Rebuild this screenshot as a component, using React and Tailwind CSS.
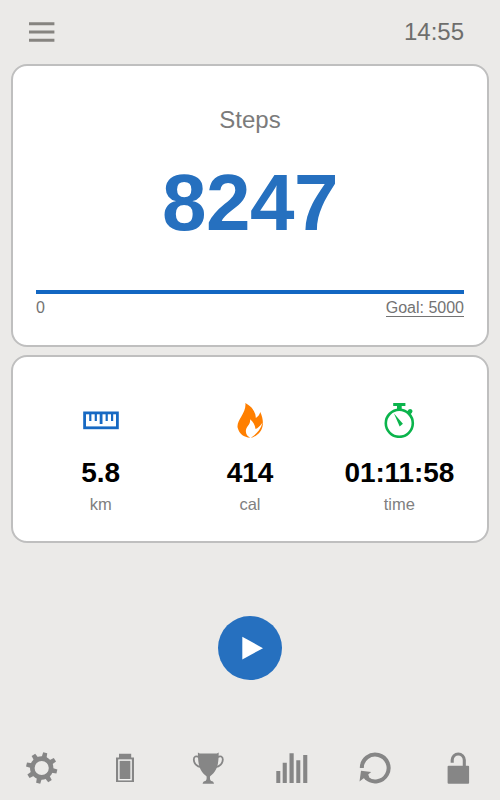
import React from 'react';

const RulerIcon = () => (
    <svg viewBox="0.6 0 36 36" className="w-9 h-9" fill="none" stroke="#1769c3">
        <rect x="2.2" y="10.9" width="32.8" height="14.9" strokeWidth="2.8" />
        <path d="M7.9 11v8M13.4 11v8M24.3 11v8M29.7 11v8" strokeWidth="2.2" />
        <path d="M18.7 11v11" strokeWidth="2.8" />
    </svg>
);

const FlameIcon = () => (
    <svg viewBox="0 -0.4 36 36.4" className="w-9 h-9" fill="#ff7f00">
        <path d="M13.3 0.5C20 4 23.6 9.2 23.9 15.8C26.2 14.5 27.7 12.4 28.4 9.8C32.6 19.3 32.2 28 24.2 33.4C22.4 34.6 20.8 35.4 18.8 35.7C23.6 33 28.6 28.2 30.7 20.4C28.2 24.2 25.8 26.2 23.6 26.9C23 22.8 21.2 19.3 18.1 17C18.7 22.8 13.8 24 13.8 29.2C13.8 32.3 15.6 34.4 18.2 35.8C11.7 35.4 7.2 32 5.6 26C3.5 18.3 14.7 10.8 13.3 0.5Z" />
    </svg>
);

const StopwatchIcon = () => (
    <svg viewBox="-1 -0.3 36 36" className="w-9 h-9" fill="#0bb44c">
        <path d="M11.2 0.7h12.2v3h-3.7v3h-4.7v-3h-3.8z" />
        <circle cx="17.3" cy="21" r="13.5" fill="none" stroke="#0bb44c" strokeWidth="2.6" />
        <path d="M24.9 9.4l1.6-1.9a2.2 2.2 0 0 1 3.4 3l-1.6 1.8z" />
        <path d="M12 11.3l8.9 10.2-3.2 2.8z" />
    </svg>
);

const GearIcon = () => (
    <svg viewBox="-17.7 -18 36 36" className="w-9 h-9" fill="#868686">
        <circle r="9.4" fill="none" stroke="#868686" strokeWidth="4.6" />
        {[13, 58, 103, 148, 193, 238, 283, 328].map((angle) => (
            <path key={angle} d="M-2.5 -10.5L-2.1 -15.6H2.1L2.5 -10.5Z" transform={`rotate(${angle})`} />
        ))}
    </svg>
);

const BatteryIcon = () => (
    <svg viewBox="0 0 36 36" className="w-9 h-9" fill="#868686">
        <path d="M12 3.8h12.2v3.6H27V32H9V7.4h3z" />
        <rect x="11.9" y="10.1" width="12.2" height="19.6" fill="none" stroke="#f5f5f4" strokeWidth="1.4" />
    </svg>
);

const TrophyIcon = () => (
    <svg viewBox="-0.3 0 36 36" className="w-9 h-9" fill="#868686">
        <path d="M7.6 2.6l1.8.8h17.2l1.8-.8C28.3 12.5 27.8 20.5 19.8 26.2c-.4 2.5 0 3.9 1.1 4.8 1.6.2 2.6 1 2.8 2.8H12.3c.2-1.8 1.2-2.6 2.8-2.8 1.1-.9 1.5-2.3 1.1-4.8C8.2 20.5 7.7 12.5 7.6 2.6z" />
        <path d="M9 7.3C5.8 5.3 3.4 6.5 3.5 9.7c.1 3.5 3 7 7.4 7.5M27 7.3c3.2-2 5.6-.8 5.5 2.4-.1 3.5-3 7-7.4 7.5" fill="none" stroke="#868686" strokeWidth="1.8" />
    </svg>
);

const ChartIcon = () => (
    <svg viewBox="0 0 36 36" className="w-9 h-9" fill="#868686">
        <path d="M2.3 21h4v12h-4zM8.7 12.7h4.1V33H8.7zM15.5 3.3h4.2V33h-4.2zM22.3 10.2h4V33h-4zM29.2 5h4.1v28h-4.1z" />
    </svg>
);

const ResetIcon = () => (
    <svg viewBox="0 0 36 36" className="w-9 h-9" fill="#868686">
        <path d="M4.8 18a13.4 13.4 0 1 1 4.3 9.8" fill="none" stroke="#868686" strokeWidth="4" />
        <path d="M4 20.8l10.2 1.3-3 2.5 1 2.4-3.3 2.7-2.2-1.5-4.2 3.3z" />
    </svg>
);

const UnlockIcon = () => (
    <svg viewBox="-0.4 0 36 36" className="w-9 h-9" fill="#868686">
        <rect x="7.2" y="15.8" width="21.5" height="18" rx="1" />
        <path d="M11.8 12.7V10a6 6 0 0 1 12.1 0v6.5" fill="none" stroke="#868686" strokeWidth="3.1" />
    </svg>
);

const stats = [
    { icon: RulerIcon, value: '5.8', label: 'km' },
    { icon: FlameIcon, value: '414', label: 'cal' },
    { icon: StopwatchIcon, value: '01:11:58', label: 'time' },
];

const navItems = [
    { icon: GearIcon, title: 'Settings' },
    { icon: BatteryIcon, title: 'Battery' },
    { icon: TrophyIcon, title: 'Achievements' },
    { icon: ChartIcon, title: 'Statistics' },
    { icon: ResetIcon, title: 'Reset' },
    { icon: UnlockIcon, title: 'Lock' },
];

const App = () => {
    return (
        <div className="w-[500px] h-[800px] flex flex-col bg-[#ebeae8] font-['Liberation_Sans',sans-serif] overflow-hidden">
            {/* Top bar */}
            <header className="h-16 shrink-0 flex items-center justify-between pl-[29px] pr-9">
                <button aria-label="Menu">
                    <svg viewBox="0 0 26 20" className="w-[26px] h-5" fill="#868480">
                        <path d="M0 .3h25.4v2.9H0zM0 8.6h25.4v2.9H0zM0 16.8h25.4v2.9H0z" />
                    </svg>
                </button>
                <span className="text-2xl text-[#6e6e6c]">14:55</span>
            </header>

            <main className="flex flex-col gap-2 px-[11px]">
                {/* Steps */}
                <section className="h-[283px] bg-white border-2 border-[#bfbfbf] rounded-2xl px-[23px] flex flex-col">
                    <h2 className="mt-[38px] text-2xl leading-8 text-center text-[#7b7b7b]">Steps</h2>
                    <div className="mt-[21px] text-[80px] leading-[92px] font-bold text-center tracking-[-0.5px] text-[#2670bf]">8247</div>
                    <div className="mt-[41px] h-1 bg-[#1267c2]" />
                    <div className="mt-1 flex justify-between text-base leading-5 text-[#737373]">
                        <span>0</span>
                        <button className="h-[19px] border-b border-[#737373]">Goal: 5000</button>
                    </div>
                </section>

                {/* Distance, calories, time */}
                <section className="h-[188px] bg-white border-2 border-[#bfbfbf] rounded-2xl px-[13px] pt-[45px] grid grid-cols-3 content-start">
                    {stats.map(({ icon: Icon, value, label }) => (
                        <div key={label} className="flex flex-col items-center">
                            <Icon />
                            <div className="mt-[19px] text-[28px] leading-8 font-bold tracking-[-0.1px] text-black">{value}</div>
                            <div className="mt-[3px] text-[16.5px] leading-6 text-[#808080]">{label}</div>
                        </div>
                    ))}
                </section>
            </main>

            {/* Start */}
            <div className="mt-[73px] flex justify-center">
                <button aria-label="Start" className="w-16 h-16 rounded-full bg-[#2670bf]">
                    <svg viewBox="0 0 64 64" className="w-16 h-16" fill="#fff">
                        <path d="M24.3 20.7L45 32.2 24.3 43.5z" />
                    </svg>
                </button>
            </div>

            {/* Bottom navigation */}
            <nav className="mt-auto mb-3.5 grid grid-cols-6 justify-items-center">
                {navItems.map(({ icon: Icon, title }) => (
                    <button key={title} aria-label={title}>
                        <Icon />
                    </button>
                ))}
            </nav>
        </div>
    );
};

export default App;
